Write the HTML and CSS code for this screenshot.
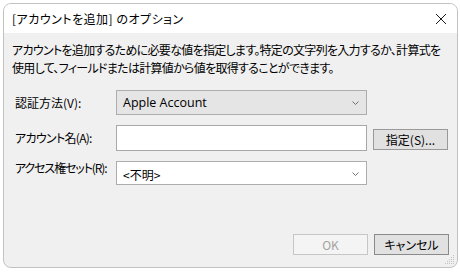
FILE: index.html
```
<!DOCTYPE html>
<html lang="ja">
<head>
<meta charset="utf-8">
<link rel="stylesheet" href="styles.css">
</head>
<body>
<div class="window">
  <div class="titlebar">
    <span class="title">[アカウントを追加] のオプション</span>
    <svg class="close" width="12" height="12" viewBox="0 0 12 12"><path d="M1 1 L11 11 M11 1 L1 11" stroke="#1a1a1a" stroke-width="1" fill="none"/></svg>
  </div>
  <div class="content">
    <p class="desc">アカウントを追加するために必要な値を指定します。特定の文字列を入力するか、計算式を<br>使用して、フィールドまたは計算値から値を取得することができます。</p>
    <div class="form">
      <label class="lbl">認証方法(V):</label>
      <div class="combo combo-grey"><span class="latin">Apple Account</span><svg class="chev" width="7" height="4" viewBox="0 0 7 4"><path d="M0.5 0.5 L3.5 3.5 L6.5 0.5" stroke="#707070" fill="none"/></svg></div>
      <div></div>
      <label class="lbl lbl-kana">アカウント名(A):</label>
      <div class="input"></div>
      <button class="btn">指定(S)...</button>
      <label class="lbl lbl-tight">アクセス権セット(R):</label>
      <div class="combo combo-white"><span class="combo-text">&lt;不明&gt;</span><svg class="chev" width="7" height="4" viewBox="0 0 7 4"><path d="M0.5 0.5 L3.5 3.5 L6.5 0.5" stroke="#707070" fill="none"/></svg></div>
      <div></div>
    </div>
    <div class="footer">
      <button class="btn btn-disabled latin">OK</button>
      <button class="btn btn-cancel">キャンセル</button>
    </div>
    <svg class="grip" width="10" height="10" viewBox="0 0 10 10" fill="#c4c4c4">
      <rect x="8" y="0" width="1" height="1"/>
      <rect x="6" y="2" width="1" height="1"/><rect x="8" y="2" width="1" height="1"/>
      <rect x="4" y="4" width="1" height="1"/><rect x="6" y="4" width="1" height="1"/><rect x="8" y="4" width="1" height="1"/>
      <rect x="2" y="6" width="1" height="1"/><rect x="4" y="6" width="1" height="1"/><rect x="6" y="6" width="1" height="1"/><rect x="8" y="6" width="1" height="1"/>
      <rect x="0" y="8" width="1" height="1"/><rect x="2" y="8" width="1" height="1"/><rect x="4" y="8" width="1" height="1"/><rect x="6" y="8" width="1" height="1"/><rect x="8" y="8" width="1" height="1"/>
    </svg>
  </div>
</div>
</body>
</html>
```
FILE: styles.css
```
* { box-sizing: border-box; }
html, body { margin: 0; padding: 0; background: #ffffff; }
body {
  font-family: "Noto Sans CJK JP", "Noto Sans", sans-serif;
  font-size: 12px;
  font-feature-settings: "palt";
  color: #000;
  padding: 3px;
}
.window {
  width: 455px;
  height: 265px;
  border: 1px solid #c2c2c2;
  border-radius: 8px;
  overflow: hidden;
  display: flex;
  flex-direction: column;
  background: #f0f0f0;
}
.titlebar {
  height: 29px;
  background: #ffffff;
  display: flex;
  align-items: center;
  justify-content: space-between;
  padding: 0 8px 0 8px;
  flex: none;
}
.title { font-size: 12px; line-height: 16px; letter-spacing: 0.5px; }
.close { margin-right: 2px; margin-top: 1px; }
.content {
  flex: 1;
  position: relative;
  display: flex;
  flex-direction: column;
  padding: 0 8px 12px 8px;
}
.desc {
  margin: 0;
  padding-top: 8px;
  line-height: 18px;
  letter-spacing: -0.7px;
  white-space: nowrap;
}
.form {
  margin-top: 13px;
  padding-left: 3px;
  display: grid;
  grid-template-columns: 95px 251px 75px;
  grid-template-rows: 25px 26px 24px;
  column-gap: 6px;
  row-gap: 10px;
  align-items: center;
}
.lbl { line-height: 16px; white-space: nowrap; }
.lbl-kana { letter-spacing: -0.7px; }
.lbl-tight { letter-spacing: -1.1px; padding-bottom: 10px; }
.combo {
  height: 100%;
  border: 1px solid #adadad;
  display: flex;
  align-items: center;
  justify-content: space-between;
  padding: 0 7px 0 6px;
}
.combo-grey { background: #e5e5e5; }
.combo-white { background: #ffffff; }
.combo-text { margin-top: 2px; }
.latin { font-family: "Open Sans", "Noto Sans", sans-serif; font-size: 12px; }
.combo-grey .latin { font-size: 12.5px; }
.chev { flex: none; margin-top: 1px; }
.input {
  height: 100%;
  background: #ffffff;
  border: 1px solid #a8a8a8;
}
.btn {
  font-family: "Noto Sans CJK JP", "Noto Sans", sans-serif;
  font-feature-settings: "palt";
  font-size: 12px;
  width: 75px;
  height: 21px;
  padding: 0;
  background: #e1e1e1;
  border: 1px solid #999999;
  color: #000;
  line-height: 19px;
}
.form .btn { margin-top: 3px; }
.footer {
  margin-top: auto;
  display: flex;
  justify-content: flex-end;
  gap: 6px;
}
.btn-disabled {
  background: #f4f4f4;
  border-color: #c6c6c6;
  color: #a3a3a3;
}
.btn-cancel { border-color: #8a8a8a; }
.grip { position: absolute; right: 2px; bottom: 2px; }
```
